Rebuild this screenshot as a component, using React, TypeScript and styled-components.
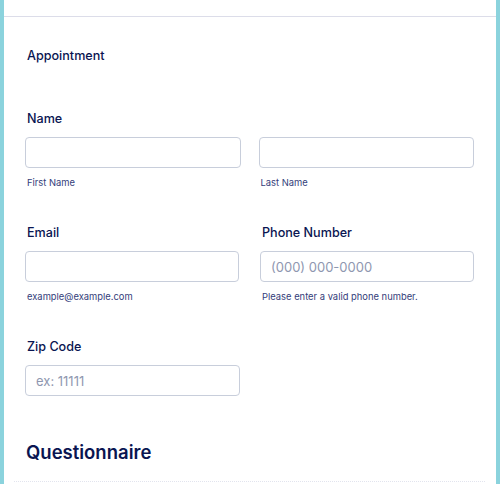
import { createGlobalStyle, styled } from 'styled-components';

const GlobalStyle = createGlobalStyle`
    html, body {
        margin: 0;
        padding: 0;
        background: #8bd3dd;
    }
    body {
        font-family: Inter, 'Noto Sans', sans-serif;
        color: #0a1551;
    }
    * {
        box-sizing: border-box;
    }
`;

const Page = styled.div`
    padding: 0 4px;
    height: 484px;
    overflow: hidden;
`;

const Card = styled.div`
    background: #ffffff;
    height: 100%;
`;

const TopRule = styled.div`
    height: 17px;
    border-bottom: 1px solid #dcdde9;
`;

const Body = styled.div`
    padding: 30px 22px 0 21px;
`;

const Label = styled.div<{ $top?: number }>`
    font-size: 12.6px;
    line-height: 18px;
    font-weight: 500;
    color: #0a1551;
    padding-left: 2px;
    margin-top: ${(p) => p.$top ?? 0}px;
`;

const Row = styled.div<{ $gap?: number }>`
    display: grid;
    grid-template-columns: 1fr 1fr;
    column-gap: ${(p) => p.$gap ?? 19}px;
`;

const Field = styled.div<{ $top?: number }>`
    display: flex;
    flex-direction: column;
    margin-top: ${(p) => p.$top ?? 0}px;
`;

const Input = styled.input`
    margin-top: 9px;
    width: 100%;
    height: 31px;
    border: 1px solid #c8cedb;
    border-radius: 4px;
    padding: 0 10px;
    font-family: Inter, 'Noto Sans', sans-serif;
    font-size: 13px;
    color: #0a1551;
    background: #ffffff;
    outline: none;

    &::placeholder {
        color: #8f97b0;
    }
`;

const SubLabel = styled.div`
    margin-top: 8px;
    font-size: 9.4px;
    line-height: 13px;
    color: #34407a;
    padding-left: 2px;
`;

const Half = styled.div`
    width: calc(50% - 10px);
`;

const Heading = styled.h2`
    margin: 44px 0 0 1px;
    font-size: 18.5px;
    line-height: 24px;
    font-weight: 600;
    color: #0a1551;
`;

const BottomRule = styled.div`
    margin: 17px 11px 0 10px;
    border-top: 1px dotted #e2e4ee;
`;

const App = () => {
    return (
        <>
            <GlobalStyle />
            <Page>
                <Card>
                    <TopRule />
                    <Body>
                        <Label>Appointment</Label>

                        <Field $top={45}>
                            <Label>Name</Label>
                            <Row $gap={18}>
                                <Field>
                                    <Input />
                                    <SubLabel>First Name</SubLabel>
                                </Field>
                                <Field>
                                    <Input />
                                    <SubLabel>Last Name</SubLabel>
                                </Field>
                            </Row>
                        </Field>

                        <Row $gap={21}>
                            <Field $top={35}>
                                <Label>Email</Label>
                                <Input />
                                <SubLabel>example@example.com</SubLabel>
                            </Field>
                            <Field $top={35}>
                                <Label>Phone Number</Label>
                                <Input placeholder="(000) 000-0000" />
                                <SubLabel>
                                    Please enter a valid phone number.
                                </SubLabel>
                            </Field>
                        </Row>

                        <Half>
                            <Field $top={35}>
                                <Label>Zip Code</Label>
                                <Input placeholder="ex: 11111" />
                            </Field>
                        </Half>

                        <Heading>Questionnaire</Heading>
                    </Body>
                    <BottomRule />
                </Card>
            </Page>
        </>
    );
};

export default App;
